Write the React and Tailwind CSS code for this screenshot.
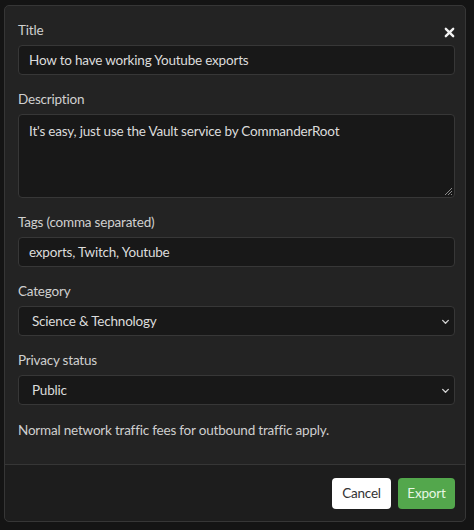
const Field = ({ label, children }) => (
  <div className="flex flex-col">
    <label className="text-[13.5px] leading-[20px] text-[#d0d0d0] mb-[5px]">{label}</label>
    {children}
  </div>
);

const inputBox =
  'h-[30px] w-full rounded-[4px] border border-[#373737] bg-[#181818] px-[10px] text-[13.5px] text-[#dcdcdc] flex items-center';

const Chevron = () => (
  <svg width="9" height="9" viewBox="0 0 16 16" className="text-[#cfcfcf]">
    <path d="M3 6l5 5 5-5" fill="none" stroke="currentColor" strokeWidth="2.4" strokeLinecap="round" strokeLinejoin="round" />
  </svg>
);

export default function App() {
  return (
    <div
      className="h-[530px] w-[474px] overflow-hidden bg-[#141414] pl-[4px] pt-[5px] tracking-[-0.2px]"
      style={{ fontFamily: 'Lato, "Noto Sans", sans-serif' }}
    >
      <div className="w-[462px] h-[517px] rounded-[5px] border border-[#363636] bg-[#232323] flex flex-col">
        {/* body */}
        <div className="flex-1 pl-[13px] pr-[10px] pt-[14px] flex flex-col gap-[14px]">
          <div className="flex flex-col">
            <div className="flex items-center justify-between mb-[5px]">
              <label className="text-[13.5px] leading-[20px] text-[#d0d0d0]">Title</label>
              <svg width="11" height="11" viewBox="0 0 12 12" className="mt-[4px]">
                <path d="M2 2l8 8M10 2l-8 8" stroke="#f2f2f2" strokeWidth="2.6" strokeLinecap="round" />
              </svg>
            </div>
            <div className={inputBox}>How to have working Youtube exports</div>
          </div>

          <Field label="Description">
            <div className="relative h-[84px] w-full rounded-[4px] border border-[#373737] bg-[#181818] px-[10px] pt-[6px] text-[13.5px] text-[#dcdcdc]">
              It's easy, just use the Vault service by CommanderRoot
              <svg width="10" height="10" viewBox="0 0 10 10" className="absolute right-[1px] bottom-[1px]">
                <path d="M9 2L2 9M9 5L5 9M9 8L8 9" stroke="#8a8a8a" strokeWidth="1" />
              </svg>
            </div>
          </Field>

          <Field label="Tags (comma separated)">
            <div className={inputBox}>exports, Twitch, Youtube</div>
          </Field>

          <Field label="Category">
            <div className={inputBox + ' justify-between pl-[13px] pr-[4px]'}>
              <span>Science &amp; Technology</span>
              <Chevron />
            </div>
          </Field>

          <Field label="Privacy status">
            <div className={inputBox + ' justify-between pl-[13px] pr-[4px]'}>
              <span>Public</span>
              <Chevron />
            </div>
          </Field>

          <p className="mt-[1px] text-[13.5px] leading-[20px] text-[#cfcfcf]">
            Normal network traffic fees for outbound traffic apply.
          </p>
        </div>

        {/* footer */}
        <div className="h-[57px] border-t border-[#363636] bg-[#1d1d1d] rounded-b-[5px] flex items-center justify-end gap-[7px] pl-[13px] pr-[10px]">
          <button className="h-[31px] w-[59px] rounded-[4px] bg-white text-[#333] text-[13.5px]">Cancel</button>
          <button className="h-[31px] w-[57px] rounded-[4px] bg-[#53a74c] text-[#e6f7e3] text-[13.5px]">Export</button>
        </div>
      </div>
    </div>
  );
}
